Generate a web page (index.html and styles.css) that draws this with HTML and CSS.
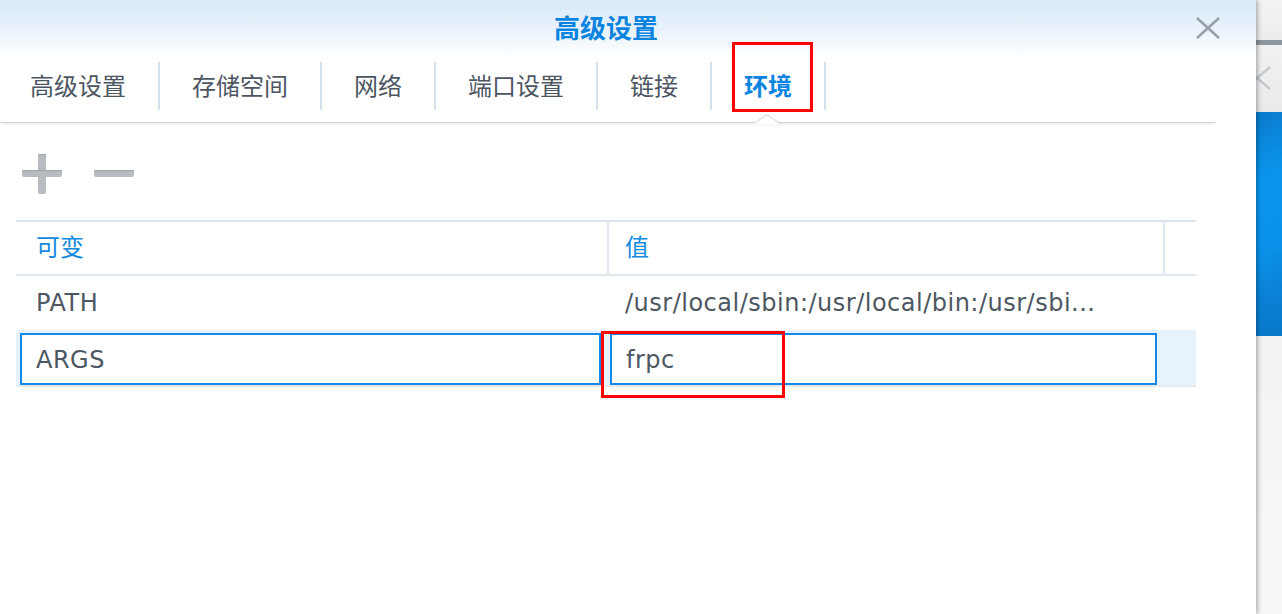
FILE: index.html
```html
<!DOCTYPE html>
<html lang="zh-CN">
<head>
<meta charset="utf-8">
<title>高级设置</title>
<link rel="stylesheet" href="styles.css">
</head>
<body>
<div class="screen">
  <div class="dialog">
    <div class="titlebar">
      <div class="title">高级设置</div>
      <svg class="close" width="24" height="22" viewBox="0 0 24 22">
        <path d="M1 1 L23 21 M23 1 L1 21" stroke="#979ea6" stroke-width="2.4" fill="none"/>
      </svg>
    </div>
    <div class="tabbar">
      <div class="tab first">高级设置</div>
      <div class="tab">存储空间</div>
      <div class="tab">网络</div>
      <div class="tab">端口设置</div>
      <div class="tab">链接</div>
      <div class="tab active">环境
        <svg class="notch" width="26" height="12" viewBox="0 0 26 12">
          <polygon points="0,11 13,1.5 26,11" fill="#fff"/>
          <polyline points="0,10.5 13,1.5 26,10.5" fill="none" stroke="#d3d3d3" stroke-width="1"/>
        </svg>
      </div>
    </div>
    <div class="toolbar">
      <svg class="tool" width="40" height="40" viewBox="0 0 40 40">
        <rect x="16" y="0" width="8" height="40" rx="2" fill="#b8bbbf"/>
        <rect x="0" y="16" width="40" height="7" rx="2" fill="#b8bbbf"/>
        <rect x="16" y="0" width="8" height="1.2" rx="0.6" fill="#a3a7ac"/>
        <rect x="0" y="16" width="40" height="1.2" rx="0.6" fill="#a3a7ac"/>
      </svg>
      <svg class="tool" width="40" height="40" viewBox="0 0 40 40">
        <rect x="0" y="16" width="40" height="7" rx="2" fill="#b8bbbf"/>
        <rect x="0" y="16" width="40" height="1.2" rx="0.6" fill="#a3a7ac"/>
      </svg>
    </div>
    <div class="grid">
      <div class="row head">
        <div class="cell c1">可变</div>
        <div class="cell c2">值</div>
        <div class="cell c3"></div>
      </div>
      <div class="row body">
        <div class="cell c1">PATH</div>
        <div class="cell c2">/usr/local/sbin:/usr/local/bin:/usr/sbi...</div>
        <div class="cell c3"></div>
      </div>
      <div class="row selected">
        <div class="editor e1">ARGS</div>
        <div class="editor e2">frpc</div>
      </div>
    </div>
    <div class="mark mark-tab"></div>
    <div class="mark mark-value"></div>
  </div>
  <div class="backwin">
    <div class="bw-top"></div>
    <div class="bw-bar"></div>
    <div class="bw-head">
      <svg class="bw-x" width="26" height="30" viewBox="0 0 26 30">
        <path d="M-12 4 L14 26 M-12 26 L14 4" stroke="#c6cacd" stroke-width="2.4" fill="none"/>
      </svg>
    </div>
    <div class="bw-blue"></div>
    <div class="bw-rest"></div>
  </div>
</div>
</body>
</html>
```
FILE: styles.css
```css
* { box-sizing: border-box; }
html, body { margin: 0; padding: 0; }
body {
  width: 1282px;
  height: 614px;
  overflow: hidden;
  background: #fff;
  font-family: "DejaVu Sans", "Noto Sans CJK SC", sans-serif;
}
.screen {
  display: flex;
  width: 1282px;
  height: 614px;
}
.dialog {
  position: relative;
  z-index: 1;
  width: 1256px;
  flex: none;
  background: linear-gradient(#d9e9f8 0px, #e9f2fc 30px, #fbfdff 52px, #fff 60px);
  box-shadow: 2px 0 4px rgba(0, 0, 0, 0.28);
}
.titlebar {
  height: 56px;
  display: flex;
  align-items: center;
}
.title {
  flex: 1;
  text-align: center;
  padding-left: 16px;
  padding-bottom: 3px;
  font-family: "Noto Sans CJK SC", sans-serif;
  font-weight: bold;
  font-size: 26px;
  color: #0a84df;
  line-height: 30px;
}
.close {
  margin-right: 36px;
  flex: none;
}
.tabbar {
  width: 1216px;
  display: flex;
  padding-top: 6px;
  padding-bottom: 12px;
  border-bottom: 1px solid #d6d6d6;
  box-shadow: 0 3px 3px -2px rgba(0, 0, 0, 0.1);
}
.tab {
  position: relative;
  height: 48px;
  padding: 0 32px 4px;
  display: flex;
  align-items: center;
  border-right: 2px solid #d4e0eb;
  font-family: "Noto Sans CJK SC", sans-serif;
  font-size: 24px;
  color: #4c5663;
}
.tab.first { padding-left: 30px; }
.tab.active {
  color: #0b84e0;
  font-weight: bold;
}
.notch {
  position: absolute;
  left: calc(50% - 14px);
  top: 51px;
}
.toolbar {
  display: flex;
  gap: 32px;
  padding: 31px 0 0 22px;
}
.tool { display: block; }
.grid {
  margin: 26px 0 0 16px;
  width: 1180px;
}
.row { display: flex; }
.cell {
  display: flex;
  align-items: center;
  font-size: 24px;
  letter-spacing: 0.5px;
  color: #4d5762;
  white-space: nowrap;
}
.c1 { width: 593px; padding-left: 20px; }
.c2 { width: 556px; padding-left: 16px; }
.c3 { flex: 1; }
.head {
  height: 56px;
  border-top: 2px solid #dbe5ef;
  border-bottom: 2px solid #dfe7ef;
}
.head .cell {
  font-family: "Noto Sans CJK SC", sans-serif;
  color: #1489e0;
  letter-spacing: 0;
  padding-bottom: 5px;
}
.head .c1, .head .c2 { border-right: 2px solid #dfe8f1; }
.body { height: 54px; }
.selected {
  height: 57px;
  background: #e6f2fc;
  border-bottom: 2px solid #e4e9ee;
  padding: 3px 0 0 4px;
  gap: 9px;
}
.editor {
  height: 52px;
  background: #fff;
  border: 2px solid #1488e6;
  display: flex;
  align-items: center;
  padding-left: 14px;
  padding-top: 1px;
  font-size: 24px;
  letter-spacing: 0.5px;
  color: #4d5762;
}
.e1 { width: 581px; }
.e2 { width: 547px; }
.mark {
  position: absolute;
  border: 3px solid #ff0000;
}
.mark-tab { left: 732px; top: 42px; width: 81px; height: 70px; }
.mark-value { left: 601px; top: 331px; width: 184px; height: 67px; }
.backwin {
  flex: 1;
  display: flex;
  flex-direction: column;
}
.bw-top { height: 40px; background: linear-gradient(#f4f4f4, #ececec); }
.bw-bar { height: 5px; background: #8d959d; }
.bw-head { height: 67px; background: linear-gradient(#f0f1f2, #e8eaec); overflow: hidden; }
.bw-x { display: block; margin-top: 18px; }
.bw-blue {
  height: 224px;
  background: linear-gradient(165deg, #0a7ccd 0%, #0a96ee 30%, #0a92ea 60%, #0a82d6 80%, #0878c8 100%);
}
.bw-rest { flex: 1; background: linear-gradient(#f2f2f2, #f8f8f8); }
```
